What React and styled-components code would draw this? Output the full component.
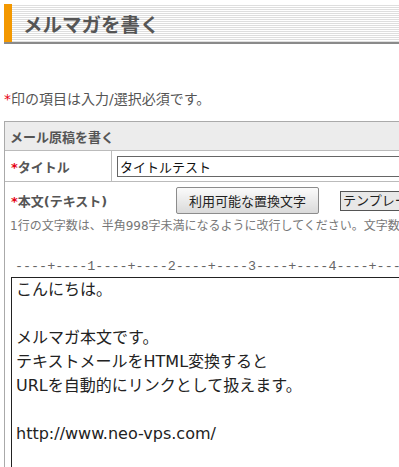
import React from 'react';
import styled, { createGlobalStyle } from 'styled-components';

const GlobalStyle = createGlobalStyle`
    body {
        margin: 0;
        background: #fff;
        overflow: hidden;
        font-family: "DejaVu Sans", "Noto Sans CJK JP", sans-serif;
    }
`

const Page = styled.div`
    padding: 4px 0 0 4px;
    width: 640px;
`

const TitleBar = styled.div`
    border-bottom: 2px solid #8a8a8a;
`

const TitleInner = styled.h1`
    margin: 0;
    height: 38px;
    display: flex;
    align-items: center;
    border-left: 8px solid #f39800;
    padding-left: 11px;
    background: repeating-linear-gradient(to bottom, #fff 0, #fff 1px, #dedede 1px, #dedede 2px);
    font-family: "Noto Sans CJK JP", sans-serif;
    font-size: 19.5px;
    font-weight: bold;
    color: #555;
`

const Required = styled.p`
    margin: 45px 0 12px;
    font-size: 14px;
    line-height: 20px;
    color: #555;
`

const Mark = styled.span`
    color: #e60012;
    font-weight: ${p => (p.bold ? 'bold' : 'normal')};
`

const Form = styled.div`
    border: 1px solid #aaa;
`

const FormHead = styled.div`
    height: 28px;
    display: flex;
    align-items: center;
    padding-left: 5px;
    background: #ececec;
    border-bottom: 1px solid #bbb;
    font-size: 13px;
    font-weight: bold;
    color: #555;
`

const Row = styled.div`
    display: flex;
    height: 30px;
    border-bottom: 1px solid #bbb;
`

const LabelCell = styled.div`
    width: 100px;
    padding-left: 6px;
    display: flex;
    align-items: center;
    border-right: 1px solid #bbb;
`

const Label = styled.span`
    font-size: 13px;
    font-weight: bold;
    color: #555;
    width: ${p => p.width || 'auto'};
`

const FieldCell = styled.div`
    flex: 1;
    display: flex;
    align-items: center;
    padding-left: 5px;
`

const TextInput = styled.input`
    width: 420px;
    height: 21px;
    box-sizing: border-box;
    border: 1px solid #666;
    padding: 0 2px;
    font-family: inherit;
    font-size: 13px;
    color: #111;
    outline: none;
`

const BodyCell = styled.div`
    padding: 5px 0 0 6px;
`

const ButtonRow = styled.div`
    display: flex;
    align-items: center;
`

const SubButton = styled.button`
    height: 27px;
    padding: 0 12px;
    border: 1px solid #8c8c8c;
    border-radius: 2px;
    background: linear-gradient(#fbfbfb, #dadada);
    font-family: inherit;
    font-size: 13px;
    color: #222;
    margin-right: 21px;
`

const PlainButton = styled.button`
    height: 20px;
    padding: 0 2px;
    border: 1px solid #555;
    border-radius: 0;
    background: #e8e8e8;
    font-family: inherit;
    font-size: 13px;
    line-height: 16px;
    color: #222;
    white-space: nowrap;
`

const Note = styled.p`
    margin: 4px 0 0 -1px;
    font-size: 12px;
    line-height: 16px;
    color: #777;
    white-space: nowrap;
`

const Ruler = styled.div`
    margin: 24px 0 1px 4px;
    font-family: "Liberation Mono", monospace;
    font-size: 13.4px;
    line-height: 18px;
    color: #666;
    white-space: pre;
`

const BodyText = styled.textarea`
    display: block;
    width: 560px;
    height: 240px;
    box-sizing: border-box;
    border: 1px solid #222;
    padding: 0 4px;
    margin: 0;
    resize: none;
    font-family: "DejaVu Sans", "Noto Sans CJK JP", sans-serif;
    font-size: 16px;
    line-height: 24px;
    color: #222;
    outline: none;
`

const body = `こんにちは。

メルマガ本文です。
テキストメールをHTML変換すると
URLを自動的にリンクとして扱えます。

http://www.neo-vps.com/`

export default function App() {
    return (
        <Page>
            <GlobalStyle />
            <TitleBar>
                <TitleInner>メルマガを書く</TitleInner>
            </TitleBar>
            <Required><Mark>*</Mark>印の項目は入力/選択必須です。</Required>
            <Form>
                <FormHead>メール原稿を書く</FormHead>
                <Row>
                    <LabelCell>
                        <Label><Mark bold>*</Mark>タイトル</Label>
                    </LabelCell>
                    <FieldCell>
                        <TextInput defaultValue="タイトルテスト" />
                    </FieldCell>
                </Row>
                <BodyCell>
                    <ButtonRow>
                        <Label width="165px"><Mark bold>*</Mark>本文(テキスト)</Label>
                        <SubButton>利用可能な置換文字</SubButton>
                        <PlainButton>テンプレート</PlainButton>
                    </ButtonRow>
                    <Note>1行の文字数は、半角998字未満になるように改行してください。文字数の目安</Note>
                    <Ruler>----+----1----+----2----+----3----+----4----+----5----+----6</Ruler>
                    <BodyText readOnly value={body} />
                </BodyCell>
            </Form>
        </Page>
    )
}
